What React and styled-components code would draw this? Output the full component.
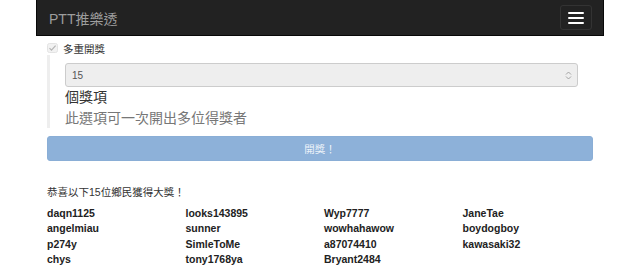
import React from "react";
import styled, { createGlobalStyle } from "styled-components";

const GlobalStyle = createGlobalStyle`
  body {
    margin: 0;
    background: #fff;
    font-family: "Liberation Sans", "Noto Sans CJK TC", sans-serif;
    color: #333;
  }
`;

const Container = styled.div`
  width: 568px;
  margin: 0 auto;
`;

const Navbar = styled.nav`
  height: 36px;
  box-sizing: border-box;
  background: #222;
  border: 1px solid #080808;
  border-top: none;
  display: flex;
  align-items: center;
  justify-content: space-between;
  padding: 0 11px 0 12px;
`;

const Brand = styled.a`
  font-size: 14px;
  color: #9d9d9d;
  text-decoration: none;
`;

const Toggle = styled.button`
  width: 32px;
  height: 25px;
  box-sizing: border-box;
  background: transparent;
  border: 1px solid #333;
  border-radius: 3px;
  display: flex;
  flex-direction: column;
  align-items: center;
  justify-content: center;
  gap: 3px;
  padding: 0;
`;

const Bar = styled.span`
  display: block;
  width: 16px;
  height: 2px;
  background: #fff;
  border-radius: 1px;
`;

const Body = styled.div`
  padding: 0 11px;
`;

const CheckRow = styled.label`
  display: flex;
  align-items: center;
  gap: 5px;
  height: 12px;
  margin-top: 6px;
  font-size: 10.5px;
  color: #333;
`;

const Quote = styled.blockquote`
  margin: 1px 0 0;
  border-left: 3px solid #eee;
  padding: 8px 15px 0 15px;
`;

const SelectBox = styled.div`
  height: 24px;
  box-sizing: border-box;
  background: #eee;
  border: 1px solid #ccc;
  border-radius: 3px;
  display: flex;
  align-items: center;
  justify-content: space-between;
  padding: 0 5px 0 6px;
  font-size: 10px;
  color: #555;
`;

const Line = styled.div`
  font-size: 14px;
  line-height: 20px;
  color: ${({ muted }) => (muted ? "#777" : "#333")};
  margin-top: ${({ gap }) => gap || 0}px;
`;

const DrawButton = styled.button`
  display: block;
  width: 100%;
  height: 25px;
  margin-top: 8px;
  border: 1px solid #8aaed6;
  border-radius: 3px;
  background: #8db1d9;
  color: rgba(255, 255, 255, 0.85);
  font-family: inherit;
  font-size: 10.5px;
  padding: 0;
`;

const Heading = styled.p`
  margin: 24px 0 0;
  font-size: 10.5px;
  line-height: 15px;
  color: #333;
`;

const Winners = styled.div`
  display: grid;
  grid-template-columns: repeat(4, 138.5px);
  grid-template-rows: repeat(4, 15.3px);
  grid-auto-flow: column;
  margin-top: 6px;
`;

const Name = styled.span`
  font-size: 10.5px;
  font-weight: bold;
  line-height: 15.3px;
  color: #222;
`;

const names = [
  "daqn1125", "angelmiau", "p274y", "chys",
  "looks143895", "sunner", "SimleToMe", "tony1768ya",
  "Wyp7777", "wowhahawow", "a87074410", "Bryant2484",
  "JaneTae", "boydogboy", "kawasaki32",
];

const CheckIcon = () => (
  <svg width="11" height="10" viewBox="0 0 11 10">
    <rect x="0.5" y="0.5" width="10" height="9" rx="2" fill="#f2f2f2" stroke="#e3e3e3" />
    <path d="M2.5 5.2 L4.5 7.2 L8.6 2.6" fill="none" stroke="#b5b5b5" strokeWidth="1.2" />
  </svg>
);

const Arrows = () => (
  <svg width="7" height="9" viewBox="0 0 7 9">
    <path d="M1 3.5 L3.5 1 L6 3.5 M1 5.5 L3.5 8 L6 5.5" fill="none" stroke="#9a9a9a" strokeWidth="0.9" />
  </svg>
);

export default function App() {
  return (
    <>
      <GlobalStyle />
      <Container>
        <Navbar>
          <Brand href="#">PTT推樂透</Brand>
          <Toggle aria-label="menu">
            <Bar />
            <Bar />
            <Bar />
          </Toggle>
        </Navbar>
        <Body>
          <CheckRow>
            <CheckIcon />
            多重開獎
          </CheckRow>
          <Quote>
            <SelectBox>
              <span>15</span>
              <Arrows />
            </SelectBox>
            <Line>個獎項</Line>
            <Line muted gap={1}>此選項可一次開出多位得獎者</Line>
          </Quote>
          <DrawButton disabled>開獎！</DrawButton>
          <Heading>恭喜以下15位鄉民獲得大獎！</Heading>
          <Winners>
            {names.map((n) => (
              <Name key={n}>{n}</Name>
            ))}
          </Winners>
        </Body>
      </Container>
    </>
  );
}
